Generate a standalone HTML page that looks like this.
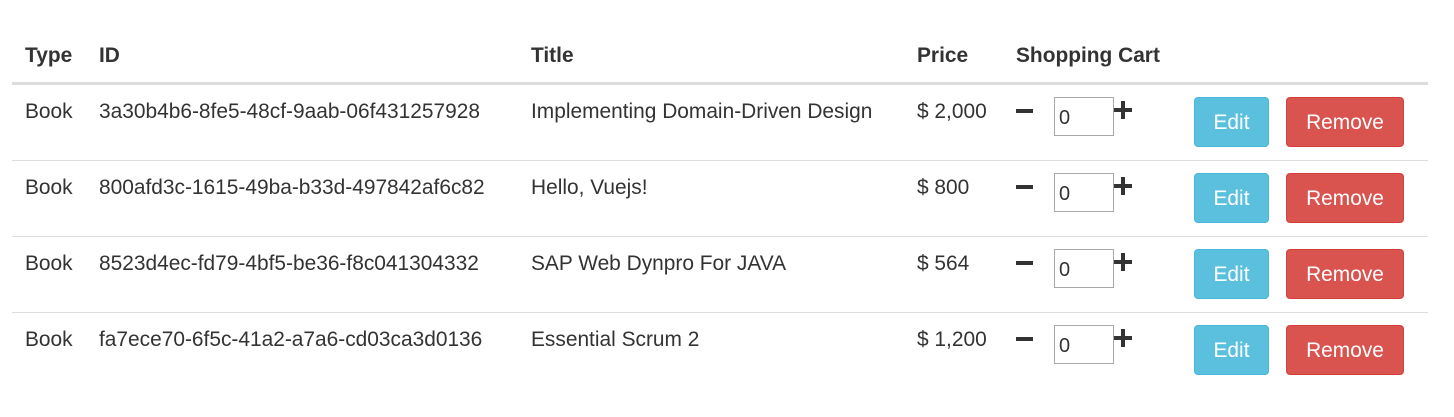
<!DOCTYPE html>
<html><head><style>
body{margin:0;width:1454px;height:417px;background:#fff;font-family:"Liberation Sans",Arial,sans-serif;color:#333;position:relative;overflow:hidden}
.a{position:absolute;font-size:20.9px;line-height:24px;white-space:nowrap}
.h{font-weight:bold}
.line{position:absolute;left:12px;width:1416px;background:#ddd}
.mi{position:absolute;width:17px;height:4px;background:#333}
.pl{position:absolute;width:18px;height:18px}
.pl:before{content:"";position:absolute;left:0;top:7px;width:18px;height:4px;background:#333}
.pl:after{content:"";position:absolute;left:7px;top:0;width:4px;height:18px;background:#333}
.in{position:absolute;left:1054px;width:60px;height:39px;border:1px solid #a9a9a9;box-sizing:border-box;font-size:20px;line-height:41px;padding-left:4px}
.btn{position:absolute;height:50px;border-radius:4px;color:#fff;font-size:20.9px;line-height:50px;text-align:center;box-sizing:border-box}
.e{left:1194px;width:75px;background:#5bc0de;border:1px solid #46b8da}
.r{left:1286px;width:118px;background:#d9534f;border:1px solid #d43f3a}
</style></head><body>
<div class="a h" style="left:25px;top:44px">Type</div>
<div class="a h" style="left:99px;top:44px">ID</div>
<div class="a h" style="left:531px;top:44px">Title</div>
<div class="a h" style="left:917px;top:44px">Price</div>
<div class="a h" style="left:1016px;top:44px">Shopping Cart</div>
<div class="line" style="top:82px;height:3px"></div>

<div class="a" style="left:25px;top:100px">Book</div>
<div class="a" style="left:99px;top:100px">3a30b4b6-8fe5-48cf-9aab-06f431257928</div>
<div class="a" style="left:531px;top:100px">Implementing Domain-Driven Design</div>
<div class="a" style="left:917px;top:100px">$ 2,000</div>
<div class="mi" style="left:1016px;top:109px"></div>
<div class="in" style="top:97px">0</div>
<div class="pl" style="left:1114px;top:101px"></div>
<div class="btn e" style="top:97px">Edit</div>
<div class="btn r" style="top:97px">Remove</div>
<div class="line" style="top:160px;height:1px"></div>

<div class="a" style="left:25px;top:176px">Book</div>
<div class="a" style="left:99px;top:176px">800afd3c-1615-49ba-b33d-497842af6c82</div>
<div class="a" style="left:531px;top:176px">Hello, Vuejs!</div>
<div class="a" style="left:917px;top:176px">$ 800</div>
<div class="mi" style="left:1016px;top:185px"></div>
<div class="in" style="top:173px">0</div>
<div class="pl" style="left:1114px;top:177px"></div>
<div class="btn e" style="top:173px">Edit</div>
<div class="btn r" style="top:173px">Remove</div>
<div class="line" style="top:236px;height:1px"></div>

<div class="a" style="left:25px;top:252px">Book</div>
<div class="a" style="left:99px;top:252px">8523d4ec-fd79-4bf5-be36-f8c041304332</div>
<div class="a" style="left:531px;top:252px">SAP Web Dynpro For JAVA</div>
<div class="a" style="left:917px;top:252px">$ 564</div>
<div class="mi" style="left:1016px;top:261px"></div>
<div class="in" style="top:249px">0</div>
<div class="pl" style="left:1114px;top:253px"></div>
<div class="btn e" style="top:249px">Edit</div>
<div class="btn r" style="top:249px">Remove</div>
<div class="line" style="top:312px;height:1px"></div>

<div class="a" style="left:25px;top:328px">Book</div>
<div class="a" style="left:99px;top:328px">fa7ece70-6f5c-41a2-a7a6-cd03ca3d0136</div>
<div class="a" style="left:531px;top:328px">Essential Scrum 2</div>
<div class="a" style="left:917px;top:328px">$ 1,200</div>
<div class="mi" style="left:1016px;top:337px"></div>
<div class="in" style="top:325px">0</div>
<div class="pl" style="left:1114px;top:329px"></div>
<div class="btn e" style="top:325px">Edit</div>
<div class="btn r" style="top:325px">Remove</div>
</body></html>
